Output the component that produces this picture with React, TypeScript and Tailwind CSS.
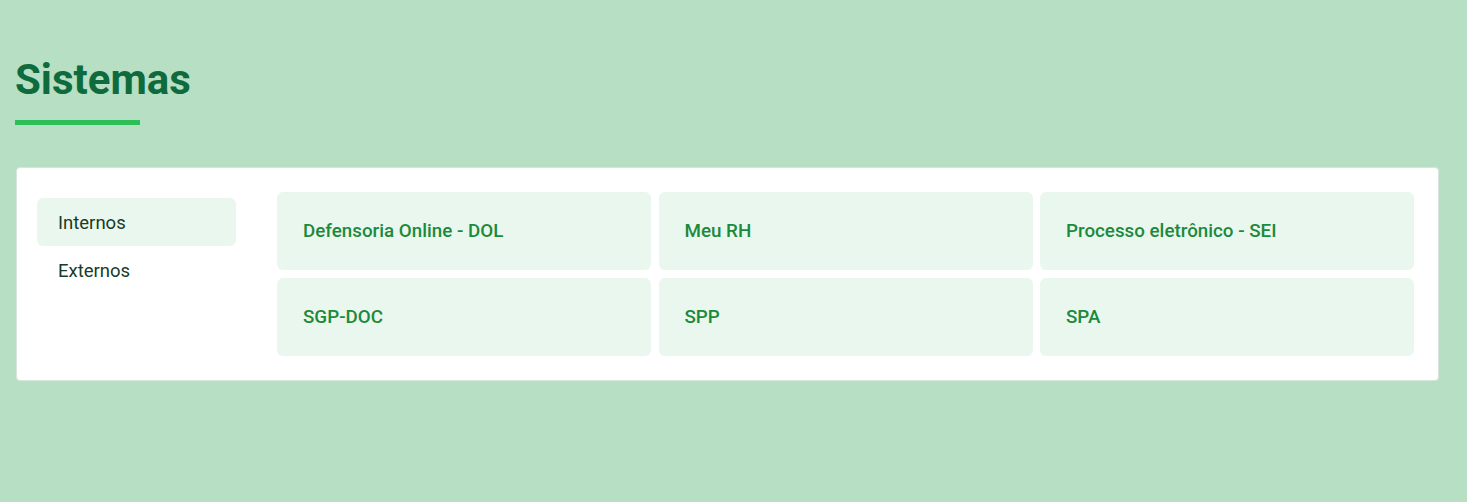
const sistemas = [
  "Defensoria Online - DOL",
  "Meu RH",
  "Processo eletrônico - SEI",
  "SGP-DOC",
  "SPP",
  "SPA",
]

export default function App() {
  return (
    <div className="min-h-[502px] bg-[#b7dfc4] px-4 pt-[52px] font-['Roboto',sans-serif]">
      <h1 className="-ml-px text-[42px] font-bold leading-[56px] text-[#0d6b3d]">Sistemas</h1>
      <div className="mt-[12px] h-[5px] w-[125px] -ml-px bg-[#2cbf57]" />

      <div className="mt-[42px] mr-[12px] flex rounded border border-[#d7e6dc] bg-white p-6">
        <ul className="mt-[6px] w-[199px] shrink-0 -ml-[4px] text-[18.5px] text-[#173b27]">
          <li className="flex h-12 items-center rounded-md bg-[#eaf7ee] px-[21px] pt-[3px]">Internos</li>
          <li className="flex h-12 items-center px-[21px] pt-[3px]">Externos</li>
        </ul>
        <div className="ml-[41px] grid flex-1 grid-cols-3 gap-x-[7.5px] gap-y-2">
          {sistemas.map((s) => (
            <a
              key={s}
              className="flex h-[78px] items-center rounded-md bg-[#eaf7ee] px-[26px] pt-px text-[18.8px] font-medium text-[#1b8a3c]"
            >
              {s}
            </a>
          ))}
        </div>
      </div>
    </div>
  )
}
